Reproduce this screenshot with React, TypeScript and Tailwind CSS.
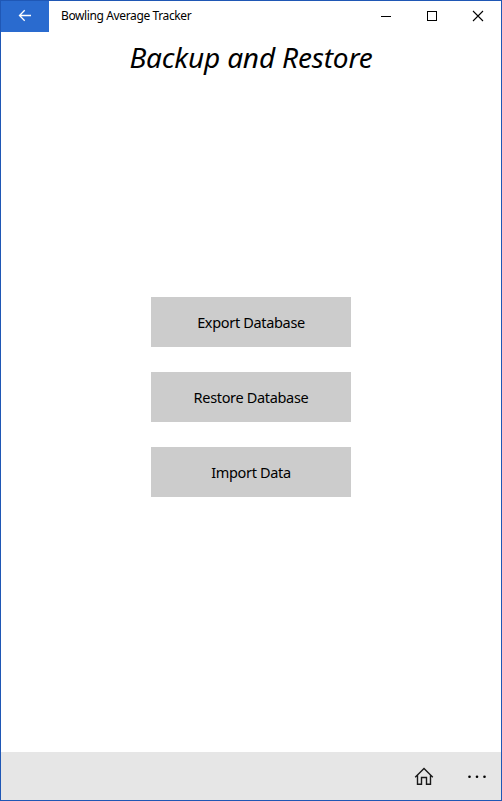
const actions = ['Export Database', 'Restore Database', 'Import Data'];

function TitleBar() {
  return (
    <header className="flex h-[31px] shrink-0 items-stretch">
      <button aria-label="Back" className="flex w-12 items-center justify-center bg-[#2a6bcf]">
        <svg width="48" height="31" viewBox="0 0 48 31" fill="none" stroke="white" strokeWidth="1.3">
          <path d="M18.5 14.5H30M23.7 9.3L18.5 14.5L23.7 19.7" />
        </svg>
      </button>
      <span className="ml-3 text-[12px] leading-[30px] tracking-[-0.38px] whitespace-nowrap">
        Bowling Average Tracker
      </span>
      <div className="ml-auto flex">
        <button aria-label="Minimize" className="w-[46px]">
          <svg width="46" height="31" fill="none" stroke="black" shapeRendering="crispEdges">
            <path d="M18 15.5H28" />
          </svg>
        </button>
        <button aria-label="Maximize" className="w-[46px]">
          <svg width="46" height="31" fill="none" stroke="black" shapeRendering="crispEdges">
            <rect x="18.5" y="10.5" width="9" height="9" />
          </svg>
        </button>
        <button aria-label="Close" className="w-[46px]">
          <svg width="46" height="31" fill="none" stroke="black" strokeWidth="1.1">
            <path d="M18 10L28 20M28 10L18 20" />
          </svg>
        </button>
      </div>
    </header>
  );
}

function CommandBar() {
  return (
    <footer className="flex h-12 shrink-0 justify-end bg-[#e6e6e6]">
      <button aria-label="Home" className="w-[60px]">
        <svg width="60" height="48" fill="none" stroke="#1a1a1a" strokeWidth="1.4">
          <path d="M21.2 25.2L30 16.6L38.8 25.2M23.5 23V32.3H27.5V25.5H32.5V32.3H36.5V23" />
        </svg>
      </button>
      <button aria-label="More" className="w-[47px]">
        <svg width="47" height="48" fill="black">
          <circle cx="15.5" cy="24.8" r="1.3" />
          <circle cx="23" cy="24.8" r="1.3" />
          <circle cx="30.5" cy="24.8" r="1.3" />
        </svg>
      </button>
    </footer>
  );
}

export default function App() {
  return (
    <div className="flex h-[801px] w-[502px] flex-col border border-[#1f57b5] bg-white font-['Segoe_UI','Noto_Sans','Open_Sans',sans-serif] text-black">
      <TitleBar />
      <h1 className="mt-[5px] h-10 text-center text-[28px] leading-10 italic tracking-[-0.17px] whitespace-nowrap">
        Backup and Restore
      </h1>
      <main className="flex grow flex-col items-center gap-[25px] pt-[220px]">
        {actions.map((label) => (
          <button
            key={label}
            className="h-[50px] w-[200px] bg-[#cccccc] text-[14.5px] leading-[50px] tracking-[-0.33px] whitespace-nowrap"
          >
            {label}
          </button>
        ))}
      </main>
      <CommandBar />
    </div>
  );
}
